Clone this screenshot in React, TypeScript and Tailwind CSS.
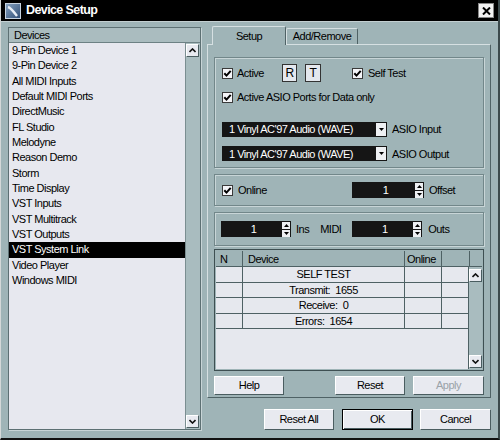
import React from 'react'

const devices = [
  '9-Pin Device 1',
  '9-Pin Device 2',
  'All MIDI Inputs',
  'Default MIDI Ports',
  'DirectMusic',
  'FL Studio',
  'Melodyne',
  'Reason Demo',
  'Storm',
  'Time Display',
  'VST Inputs',
  'VST Multitrack',
  'VST Outputs',
  'VST System Link',
  'Video Player',
  'Windows MIDI',
]

const rows = ['SELF TEST', 'Transmit:  1655', 'Receive:  0', 'Errors:  1654']

const bevel =
  'border border-t-white border-l-white border-r-[#4a5d60] border-b-[#4a5d60] bg-[#e8eaf0]'
const group =
  'border border-[#72878a] shadow-[inset_1px_1px_0_#c8d5d7,1px_1px_0_#c8d5d7]'

function Check() {
  return (
    <svg width="11" height="11" viewBox="0 0 11 11" className="shrink-0">
      <rect x="0.5" y="0.5" width="10" height="10" fill="#f4f5f8" stroke="#3a3a3a" />
      <path d="M2.3 5.2 L4.5 7.6 L8.7 2.8" stroke="#000" strokeWidth="2" fill="none" />
    </svg>
  )
}

function ScrollBtn({ up }: { up?: boolean }) {
  return (
    <div className={`w-[13px] h-[13px] ${bevel} bg-[#d9dee4] flex items-center justify-center`}>
      <svg width="7" height="5" viewBox="0 0 7 5">
        <path d={up ? 'M0.5 4 L3.5 1 L6.5 4' : 'M0.5 1 L3.5 4 L6.5 1'} stroke="#111" strokeWidth="1.6" fill="none" />
      </svg>
    </div>
  )
}

function Dropdown({ label }: { label: string }) {
  return (
    <div className="flex items-center">
      <div className="w-[165px] h-[15px] bg-[#151515] text-white flex items-center pl-[7px] pr-px">
        <span className="flex-1">1 Vinyl AC'97 Audio (WAVE)</span>
        <div className="w-[10px] h-[13px] bg-[#eef0f3] flex items-center justify-center">
          <svg width="5" height="3" viewBox="0 0 5 3"><path d="M0 0 L2.5 3 L5 0Z" fill="#000" /></svg>
        </div>
      </div>
      <span className="ml-[5px]">{label}</span>
    </div>
  )
}

function Spin({ w }: { w: string }) {
  return (
    <div className={`${w} h-[16px] bg-[#151515] text-white flex items-center pr-px`}>
      <span className="flex-1 text-center pl-1">1</span>
      <div className="flex flex-col gap-px">
        <div className="w-[8px] h-[7px] bg-[#eef0f3] flex items-center justify-center">
          <svg width="5" height="3" viewBox="0 0 5 3"><path d="M0 3 L2.5 0 L5 3Z" fill="#000" /></svg>
        </div>
        <div className="w-[8px] h-[7px] bg-[#eef0f3] flex items-center justify-center">
          <svg width="5" height="3" viewBox="0 0 5 3"><path d="M0 0 L2.5 3 L5 0Z" fill="#000" /></svg>
        </div>
      </div>
    </div>
  )
}

export default function App() {
  return (
    <div className="w-[500px] h-[440px] bg-[#9fb4b7] border-l border-l-[#d4d8d8] border-r-2 border-r-[#3c4a4c] border-b-2 border-b-[#111] overflow-hidden text-[11px] tracking-[-0.5px] text-black font-['Liberation_Sans',Arial,sans-serif]">
      {/* Title bar */}
      <div className="h-[22px] bg-black flex items-center pl-[4px] pr-[4px] border-b border-b-[#c3cfd1]">
        <svg width="16" height="16" viewBox="0 0 16 16">
          <defs>
            <linearGradient id="ig" x1="0" y1="0" x2="1" y2="1">
              <stop offset="0" stopColor="#8aa6c4" />
              <stop offset="1" stopColor="#2c4a72" />
            </linearGradient>
          </defs>
          <rect x="0" y="0" width="16" height="16" fill="url(#ig)" />
          <path d="M3 4 C6 5 9 9 12 13" stroke="#e8eef6" strokeWidth="2.4" fill="none" />
          <rect x="0.5" y="0.5" width="15" height="15" fill="none" stroke="#c8d4e0" />
        </svg>
        <span className="ml-[5px] text-white font-bold text-[12.5px] tracking-[-0.6px]">Device Setup</span>
        <div className="ml-auto w-[16px] h-[15px] bg-[#f2f2f2] border border-[#888] flex items-center justify-center">
          <svg width="9" height="8" viewBox="0 0 9 8">
            <path d="M1 0.5 L8 7.5 M8 0.5 L1 7.5" stroke="#000" strokeWidth="2" />
          </svg>
        </div>
      </div>

      <div className="flex pt-[4px] pl-[7px]">
        {/* Device list */}
        <div className="mt-px w-[193px] h-[403px] border border-[#5d7073] shadow-[1px_1px_0_#c8d5d7] flex flex-col">
          <div className="h-[15px] bg-[#aabcbf] border-b border-[#6d8184] pl-[5px] flex items-center">Devices</div>
          <div className="flex flex-1">
            <div className="flex-1 bg-[#e7e8ef] border-r border-[#7b8e91]">
              {devices.map((d) => (
                <div
                  key={d}
                  className={`h-[15.33px] leading-[15.33px] pl-[3px] ${d === 'VST System Link' ? 'bg-black text-white' : ''}`}
                >
                  {d}
                </div>
              ))}
            </div>
            <div className="w-[14px] bg-[#a9bcbf] flex flex-col justify-between py-[1px]">
              <ScrollBtn up />
              <ScrollBtn />
            </div>
          </div>
        </div>

        {/* Right side */}
        <div className="ml-[6px] w-[284px] flex flex-col">
          <div className="h-[18px] flex items-end pl-[5px]">
            <div className="relative z-10 w-[74px] h-[19px] -mb-px bg-[#9fb4b7] border border-b-0 border-t-[#d6e0e2] border-l-[#d6e0e2] border-r-[#4f6265] rounded-t-[2px] flex items-center justify-center">
              Setup
            </div>
            <div className="w-[72px] h-[16px] border border-b-0 border-t-[#d6e0e2] border-l-[#d6e0e2] border-r-[#4f6265] rounded-t-[2px] flex items-center justify-center">
              Add/Remove
            </div>
          </div>

          <div className="h-[354px] border border-t-[#d6e0e2] border-l-[#d6e0e2] border-r-[#4f6265] border-b-[#4f6265] px-[6px] pt-[12px] flex flex-col">
            {/* Group 1 */}
            <div className={`${group} h-[111px] pl-[7px] pt-[6px]`}>
              <div className="flex items-center h-[18px]">
                <Check />
                <span className="ml-[4px] w-[45px]">Active</span>
                <div className="w-[15px] h-[18px] bg-[#e4e8ee] border border-[#333] flex items-center justify-center text-[12px]">R</div>
                <div className="ml-[8px] w-[16px] h-[18px] bg-[#e4e8ee] border border-[#333] flex items-center justify-center text-[12px]">T</div>
                <div className="ml-[31px]">
                  <Check />
                </div>
                <span className="ml-[5px]">Self Test</span>
              </div>
              <div className="flex items-center h-[14px] mt-[8px]">
                <Check />
                <span className="ml-[4px]">Active ASIO Ports for Data only</span>
              </div>
              <div className="mt-[17px]">
                <Dropdown label="ASIO Input" />
              </div>
              <div className="mt-[8px]">
                <Dropdown label="ASIO Output" />
              </div>
            </div>

            {/* Group 2 */}
            <div className={`${group} mt-[6px] h-[32px] pl-[7px] flex items-center`}>
              <Check />
              <span className="ml-[5px] w-[114px]">Online</span>
              <Spin w="w-[72px]" />
              <span className="ml-[5px]">Offset</span>
            </div>

            {/* Group 3 */}
            <div className={`${group} mt-[6px] h-[34px] pl-[6px] flex items-center`}>
              <Spin w="w-[70px]" />
              <span className="ml-[5px]">Ins</span>
              <span className="ml-[11px] w-[32px]">MIDI</span>
              <Spin w="w-[70px]" />
              <span className="ml-[6px]">Outs</span>
            </div>

            {/* Table */}
            <div className="mt-[3px] h-[122px] border border-[#3e4f52] bg-[#9fb4b7] p-px flex flex-col">
              <div className="flex h-[16px] border-b border-[#4e6164]">
                <div className="w-[27px] pl-[4px] border-r border-[#4e6164]">N</div>
                <div className="w-[162px] pl-[5px] border-r border-[#4e6164]">Device</div>
                <div className="w-[37px] pl-[2px] border-r border-[#4e6164]">Online</div>
                <div className="w-[28px] border-r border-[#4e6164]" />
                <div className="flex-1" />
              </div>
              <div className="flex flex-1">
                <div className="flex-1 bg-[#e6e8ee]">
                  {rows.map((r) => (
                    <div key={r} className="flex h-[15.5px] border-b border-[#4e6164]">
                      <div className="w-[27px] border-r border-[#4e6164]" />
                      <div className="w-[162px] border-r border-[#4e6164] text-center whitespace-pre leading-[15px]">{r}</div>
                      <div className="w-[37px] border-r border-[#4e6164]" />
                      <div className="flex-1" />
                    </div>
                  ))}
                </div>
                <div className="w-[14px] border-l border-[#4e6164] bg-[#a9bcbf] flex flex-col justify-between pt-[2px] pb-px">
                  <ScrollBtn up />
                  <ScrollBtn />
                </div>
              </div>
            </div>

            {/* Buttons */}
            <div className="mt-[5px] flex">
              <div className={`${bevel} w-[70px] h-[19px] flex items-center justify-center`}>Help</div>
              <div className={`${bevel} ml-[51px] w-[70px] h-[19px] flex items-center justify-center`}>Reset</div>
              <div className={`${bevel} ml-[8px] w-[71px] h-[19px] flex items-center justify-center text-[#9aa2a8]`}>Apply</div>
            </div>
          </div>

          <div className="mt-[11px] flex pl-[57px]">
            <div className={`${bevel} w-[70px] h-[21px] flex items-center justify-center`}>Reset All</div>
            <div className="ml-[8px] w-[72px] h-[21px] border border-black bg-[#e8eaf0] shadow-[inset_1px_1px_0_white,inset_-1px_-1px_0_#4a5d60] flex items-center justify-center">
              OK
            </div>
            <div className={`${bevel} ml-[7px] w-[71px] h-[21px] flex items-center justify-center`}>Cancel</div>
          </div>
        </div>
      </div>
    </div>
  )
}
